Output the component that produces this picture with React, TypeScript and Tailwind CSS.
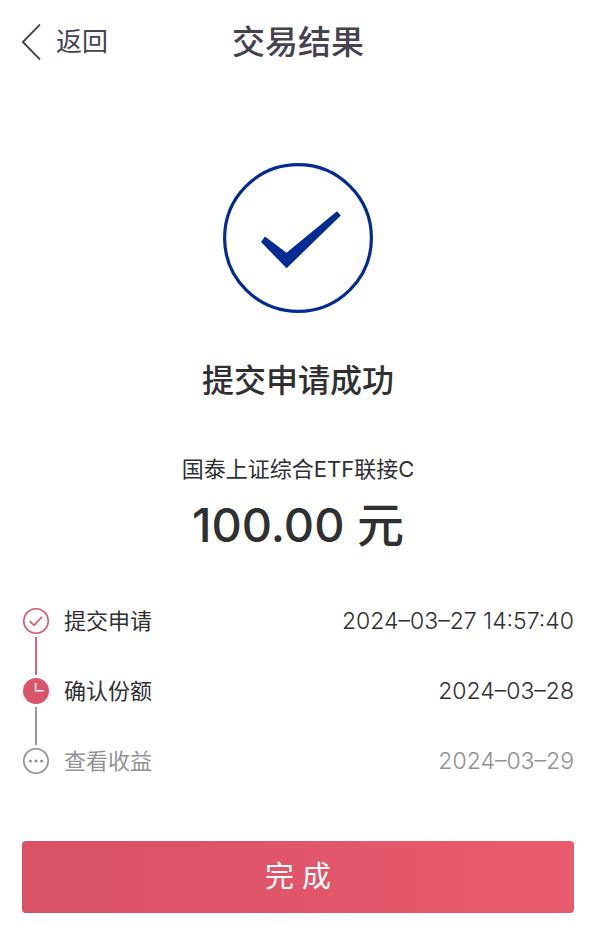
type Step = {
  label: string;
  time: string;
  status: 'done' | 'current' | 'pending';
};

const steps: Step[] = [
  { label: '提交申请', time: '2024–03–27 14:57:40', status: 'done' },
  { label: '确认份额', time: '2024–03–28', status: 'current' },
  { label: '查看收益', time: '2024–03–29', status: 'pending' },
];

function StepIcon({ status }: { status: Step['status'] }) {
  if (status === 'done') {
    return (
      <svg className="size-7" viewBox="0 0 28 28" fill="none" stroke="#d95468" strokeWidth="1.6" aria-hidden="true">
        <circle cx="14" cy="14" r="12.2" />
        <path d="M7.7 14.2l4.3 4.1 8-8.6" />
      </svg>
    );
  }

  if (status === 'current') {
    return (
      <svg className="size-7" viewBox="0 0 28 28" fill="none" aria-hidden="true">
        <circle cx="14" cy="14" r="13" fill="#d95468" />
        <path d="M13.6 6v7.8h8" stroke="#fff" strokeWidth="1.6" />
      </svg>
    );
  }

  return (
    <svg className="size-7" viewBox="0 0 28 28" fill="#8e8e90" aria-hidden="true">
      <circle cx="14" cy="14" r="12.2" fill="none" stroke="#8e8e90" strokeWidth="1.6" />
      <circle cx="8.4" cy="14" r="1.5" />
      <circle cx="14" cy="14" r="1.5" />
      <circle cx="19.6" cy="14" r="1.5" />
    </svg>
  );
}

function StepRow({ step, last }: { step: Step; last: boolean }) {
  const pending = step.status === 'pending';

  return (
    <li className={last ? 'flex' : 'flex h-[70px]'}>
      <div className="flex w-7 flex-col items-center">
        <StepIcon status={step.status} />
        {!last && (
          <div className={step.status === 'done' ? 'my-0.5 w-0.5 flex-1 bg-[#d3667a]' : 'my-0.5 w-0.5 flex-1 bg-[#9a9a9c]'} />
        )}
      </div>
      <div
        className={
          pending
            ? 'ml-3.5 flex h-7 flex-1 items-center justify-between text-[#929294]'
            : 'ml-3.5 flex h-7 flex-1 items-center justify-between'
        }
      >
        <span>{step.label}</span>
        <time className="text-[23px] font-light">{step.time}</time>
      </div>
    </li>
  );
}

export default function App() {
  return (
    <div className="min-h-screen bg-white pr-[26px] pb-9 pl-[22px] font-['Inter','Noto_Sans_CJK_SC',sans-serif] text-[22px] leading-7 text-[#2f3032]">
      {/* Header */}
      <header className="grid h-[84px] grid-cols-[1fr_auto_1fr] items-center text-[#454252]">
        <button type="button" className="flex items-center gap-3.5 text-[26px]">
          <svg className="h-9 w-5" viewBox="0 0 20 36" fill="none" stroke="#454252" strokeWidth="1.8" aria-hidden="true">
            <path d="M18 .5L.8 18 18 35.5" />
          </svg>
          返回
        </button>
        <h1 className="text-[33px] leading-10 font-medium">交易结果</h1>
      </header>

      <main>
        {/* Result */}
        <section className="flex flex-col items-center pt-[79px]">
          <svg className="size-[150px]" viewBox="0 0 150 150" fill="none" aria-hidden="true">
            <circle cx="75" cy="75" r="73.4" stroke="#032b94" strokeWidth="3.2" />
            <path d="M42 73.6L63.5 89.8 114 48.2 117.8 52.4 63.6 105.2 38 79z" fill="#032b94" />
          </svg>
          <h2 className="mt-11 text-[32px] leading-12 font-medium">提交申请成功</h2>
          <p className="mt-12 leading-8">国泰上证综合ETF联接C</p>
          <p className="mt-2 text-[47px] leading-16 font-medium">100.00 元</p>
        </section>

        {/* Progress */}
        <ol className="mt-[50px]">
          {steps.map((step, index) => (
            <StepRow key={step.label} step={step} last={index === steps.length - 1} />
          ))}
        </ol>

        <button
          type="button"
          className="mt-[66px] h-[72px] w-full rounded bg-linear-to-r from-[#d95165] to-[#e85b6c] text-[29px] text-white"
        >
          完 成
        </button>
      </main>
    </div>
  );
}
